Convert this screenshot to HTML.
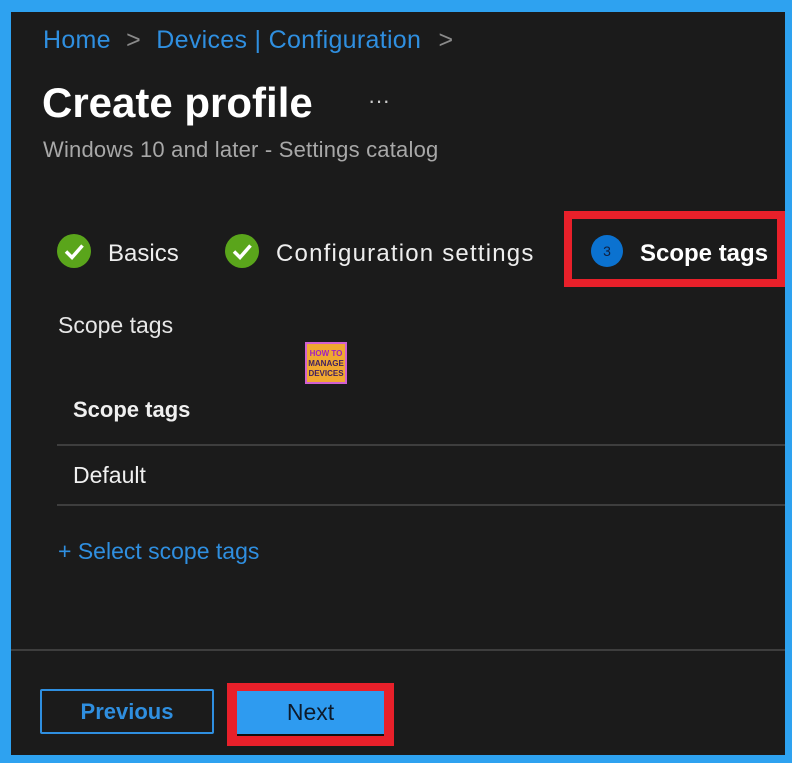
<!DOCTYPE html>
<html><head><meta charset="utf-8"><style>
*{margin:0;padding:0;box-sizing:border-box}
body{width:792px;height:763px;background:#2ea2f0;position:relative;overflow:hidden;font-family:"Liberation Sans",sans-serif}
.inner{position:absolute;left:11px;top:12px;width:774px;height:743px;background:#1b1b1b}
.a{position:absolute;white-space:nowrap}
.chk{position:absolute;width:34px;height:34px;border-radius:50%;background:#5aa51b}
.line{position:absolute;height:2px;background:#3e3e3e}
</style></head><body>
<div class="inner"></div>
<div class="a" style="left:43px;top:26px;font-size:25px;color:#2f8fe0;letter-spacing:0.3px">Home <span style="color:#8a8a8a;margin:0 8px">&gt;</span> Devices | Configuration <span style="color:#8a8a8a;margin-left:10px">&gt;</span></div>
<div class="a" style="left:42px;top:79px;font-size:42px;font-weight:bold;color:#fff">Create profile</div>
<div class="a" style="left:368px;top:88px;font-size:22px;color:#ccc">···</div>
<div class="a" style="left:43px;top:137px;font-size:22px;color:#a8a8a8;letter-spacing:0.2px">Windows 10 and later - Settings catalog</div>

<div class="chk" style="left:57px;top:234px"><svg width="34" height="34"><path d="M9 17.5l6 6 10.5-12" fill="none" stroke="#fff" stroke-width="3.5"/></svg></div>
<div class="a" style="left:108px;top:240px;font-size:24px;color:#eee">Basics</div>
<div class="chk" style="left:225px;top:234px"><svg width="34" height="34"><path d="M9 17.5l6 6 10.5-12" fill="none" stroke="#fff" stroke-width="3.5"/></svg></div>
<div class="a" style="left:276px;top:240px;font-size:24px;color:#eee;letter-spacing:1.2px">Configuration settings</div>
<div class="a" style="left:564px;top:211px;width:221px;height:76px;border:8px solid #e8202a"></div>
<div class="a" style="left:591px;top:235px;width:32px;height:32px;border-radius:50%;background:#0b72d0;color:#102040;font-size:14px;text-align:center;line-height:32px">3</div>
<div class="a" style="left:640px;top:240px;font-size:24px;font-weight:bold;color:#fff">Scope tags</div>

<div class="a" style="left:58px;top:312px;font-size:23px;color:#e6e6e6">Scope tags</div>
<div class="a" style="left:305px;top:342px;width:42px;height:42px;background:#f0a830;border:2px solid #d060d0;font-size:8px;color:#a020c0;text-align:center;line-height:10px;padding-top:5px;font-weight:bold">HOW TO<br><span style="color:#402060">MANAGE<br>DEVICES</span></div>
<div class="a" style="left:73px;top:397px;font-size:22px;font-weight:bold;color:#f0f0f0">Scope tags</div>
<div class="line" style="left:57px;top:444px;width:728px"></div>
<div class="a" style="left:73px;top:462px;font-size:23px;color:#f0f0f0">Default</div>
<div class="line" style="left:57px;top:504px;width:728px"></div>
<div class="a" style="left:58px;top:538px;font-size:23px;color:#2f8fe0">+ Select scope tags</div>

<div class="line" style="left:11px;top:649px;width:774px"></div>
<div class="a" style="left:40px;top:689px;width:174px;height:45px;border:2px solid #2f8fe0;border-radius:2px;color:#2f8fe0;font-size:22px;font-weight:bold;text-align:center;line-height:41px">Previous</div>
<div class="a" style="left:227px;top:683px;width:167px;height:63px;background:#e8202a"></div>
<div class="a" style="left:237px;top:691px;width:147px;height:45px;background:#2e9bf0;border-bottom:2px solid #111;color:#0d1a2a;font-size:23px;text-align:center;line-height:43px">Next</div>
</body></html>
